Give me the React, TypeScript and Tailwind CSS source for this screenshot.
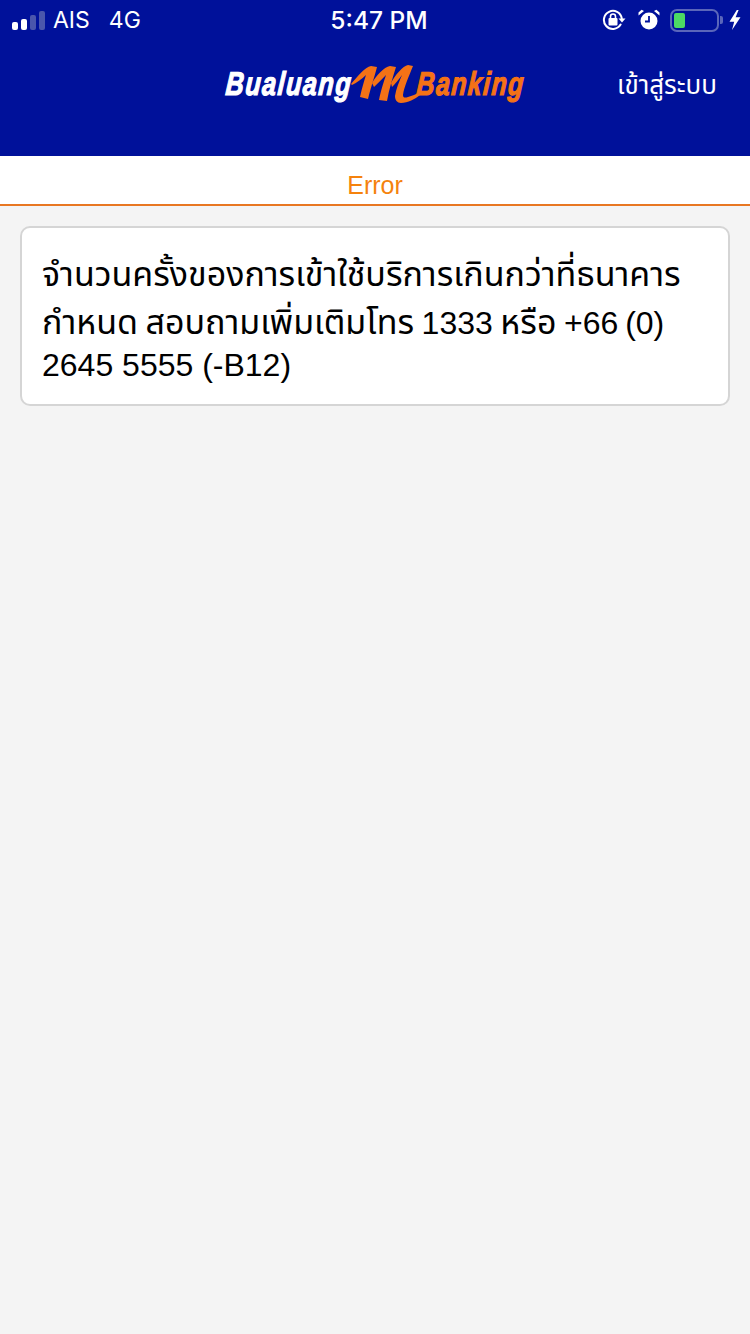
import React from 'react';

const font = { fontFamily: '"Inter", "Noto Sans", "Noto Sans Thai", "Liberation Sans", sans-serif' };
const helvetica = { fontFamily: '"Liberation Sans", "Noto Sans", "Noto Sans Thai", sans-serif' };

const SignalBars: React.FC = () => (
  <div className="flex items-end gap-[3px]">
    <span className="w-[6px] h-[8px] rounded-[2px] bg-white" />
    <span className="w-[6px] h-[11px] rounded-[2px] bg-white" />
    <span className="w-[6px] h-[15px] rounded-[2px] bg-[#4a56ac]" />
    <span className="w-[6px] h-[19px] rounded-[2px] bg-[#4a56ac]" />
  </div>
);

const RotationLock: React.FC = () => (
  <svg width="24" height="22" viewBox="0 0 24 22" fill="none">
    <path d="M18.6 15.6A9 9 0 1 1 19.8 9.5" stroke="#fff" strokeWidth="2" strokeLinecap="round" />
    <path d="M16.5 9.5h7l-3.5 4z" fill="#fff" />
    <rect x="6.5" y="9" width="9" height="7.5" rx="1" fill="#fff" />
    <path d="M8.5 9.5V7.5a2.5 2.5 0 0 1 5 0v2" stroke="#fff" strokeWidth="1.6" />
  </svg>
);

const Alarm: React.FC = () => (
  <svg width="22" height="22" viewBox="0 0 22 22" fill="none">
    <circle cx="11" cy="12" r="8.5" fill="#fff" />
    <path d="M11 7v5.5H7" stroke="#00119a" strokeWidth="1.8" />
    <path d="M0.5 6.5 6 2 3.6 0.8 0.5 3.4zM21.5 6.5 16 2l2.4-1.2 3.1 2.6z" fill="#fff" />
  </svg>
);

const Battery: React.FC = () => (
  <div className="flex items-center">
    <div className="w-[49px] h-[23px] rounded-[7px] border-2 border-[#5a66ba] p-[2px]">
      <div className="w-[11px] h-full rounded-[2px] bg-[#4cd964]" />
    </div>
    <span className="ml-[1px] w-[3px] h-[8px] rounded-r-[2px] bg-[#5a66ba]" />
  </div>
);

const Bolt: React.FC = () => (
  <svg width="12" height="20" viewBox="0 0 12 20">
    <path d="M7.8 0 .5 11.7h4.7L3 20l8.5-12.7H6.6L9.6 0z" fill="#fff" />
  </svg>
);

// Condensed heavy italic wordmark, squeezed from Liberation Sans Bold
const Logo: React.FC = () => (
  <div className="flex items-center h-[50px]" style={helvetica}>
    <span className="w-[126px] block whitespace-nowrap origin-left scale-x-[0.76] -skew-x-6 -translate-y-[1px] tracking-[2px] text-[33px] leading-none font-bold italic text-white [-webkit-text-stroke:1.2px_#fff]">
      Bualuang
    </span>
    <svg width="80" height="50" viewBox="0 0 80 50" className="-ml-[7px] -mr-[8px] shrink-0 relative">
      <path d="M6 25C12 18 20 8 26 7L32 8C30 16 26 28 23 40L15 38C17 29 19 22 21 16 17 20 11 24 7 26Z" fill="#f47216" />
      <path d="M27 24C31 17 39 8 45 7L51 8C48 18 44 30 42 42L34 41C36 31 39 22 41 16 37 20 32 25 29 28Z" fill="#f47216" />
      <path
        d="M46 24C50 16 58 7 63 6L68 7C64 17 59 28 58 36 58 39 60 39 63 38 67 37 71 35 75 33L75 36C70 40 63 44 56 44 52 44 50 41 50 37 51 30 54 23 57 16 54 20 50 25 47 28Z"
        fill="#f47216"
      />
    </svg>
    <span className="w-[107px] block whitespace-nowrap origin-left scale-x-[0.75] -skew-x-6 -translate-y-[1px] tracking-[2px] text-[33px] leading-none font-bold italic text-[#f47216] [-webkit-text-stroke:1.2px_#f47216]">
      Banking
    </span>
  </div>
);

const Latin: React.FC<{ children: React.ReactNode }> = ({ children }) => (
  <span className="text-[32px]" style={helvetica}>{children}</span>
);

export default function App() {
  return (
    <div className="w-[750px] h-[1334px] bg-[#f4f4f4] flex flex-col" style={font}>
      <header className="h-[156px] bg-[#00119a] text-white shrink-0">
        {/* Status bar */}
        <div className="h-[40px] relative flex items-center justify-between pl-[12px] pr-[9px]">
          <div className="flex items-center">
            <SignalBars />
            <span className="ml-[8px] text-[23px]">AIS</span>
            <span className="ml-[19px] text-[23px]">4G</span>
          </div>
          <span className="absolute left-[8px] right-0 text-center text-[24.5px] font-medium">5:47 PM</span>
          <div className="flex items-center">
            <RotationLock />
            <span className="ml-[12px]"><Alarm /></span>
            <span className="ml-[10px]"><Battery /></span>
            <span className="ml-[6px]"><Bolt /></span>
          </div>
        </div>
        {/* Nav bar */}
        <div className="relative h-[88px] flex items-center justify-center">
          <Logo />
          <span className="absolute right-[33px] top-[25px] text-[26px] leading-[40px]">เข้าสู่ระบบ</span>
        </div>
      </header>

      <div className="h-[50px] pt-[12px] bg-white border-b-2 border-[#e87722] flex items-center justify-center shrink-0">
        <span className="text-[25px] text-[#f5820d]" style={helvetica}>Error</span>
      </div>

      <main className="px-[20px] pt-[20px]">
        <div className="bg-white border-2 border-[#d5d5d5] rounded-[10px] pl-[20px] pt-[23px] pb-[17px] text-[34px] text-black whitespace-nowrap">
          <div className="h-[48px] leading-[46px]">จำนวนครั้งของการเข้าใช้บริการเกินกว่าที่ธนาคาร</div>
          <div className="h-[48px] leading-[46px] [word-spacing:-2px]">
            กำหนด สอบถามเพิ่มเติมโทร <Latin>1333</Latin> หรือ <Latin>+66 (0)</Latin>
          </div>
          <div className="h-[40px] leading-[33px]"><Latin>2645 5555 (-B12)</Latin></div>
        </div>
      </main>
    </div>
  );
}
